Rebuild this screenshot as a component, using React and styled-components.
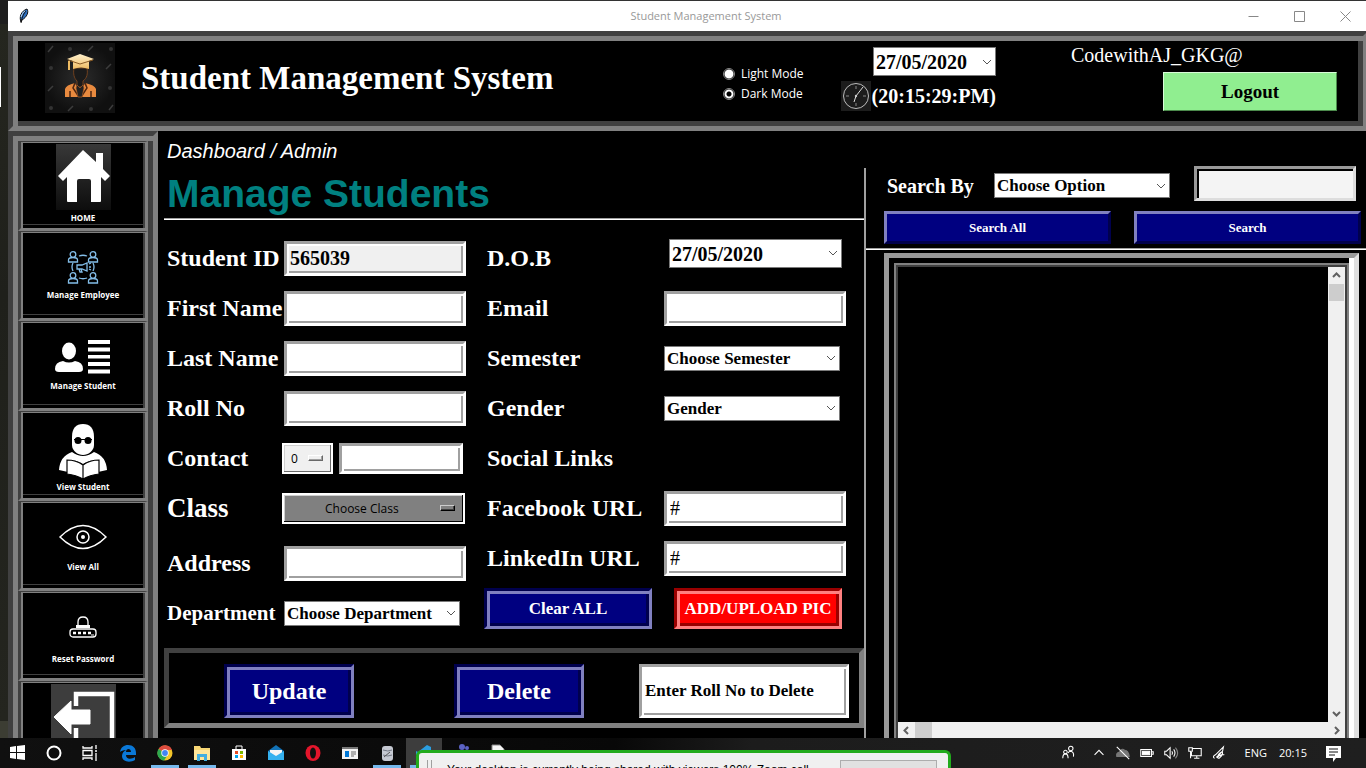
import React from "react";
import styled, { createGlobalStyle, css } from "styled-components";

const SERIF = '"Liberation Serif", "Times New Roman", serif';
const SANS = '"Liberation Sans", Arial, sans-serif';
const UI = '"Open Sans", "Noto Sans", sans-serif';

/* Classic two-tone bevels: an outer border and an inner inset line. */
const groove = (outer, inner, dark, light) => css`
  border: ${outer}px solid;
  border-color: ${dark} ${light} ${light} ${dark};
  box-shadow: inset ${inner}px ${inner}px 0 ${light}, inset -${inner}px -${inner}px 0 ${dark};
`;

const GlobalStyle = createGlobalStyle`
  *, *::before, *::after { box-sizing: border-box; }
  html, body { margin: 0; background: #000; overflow: hidden; }
  button, input, select { font: inherit; margin: 0; border-radius: 0; }
  button { cursor: pointer; }
  svg { display: block; flex: none; }
`;

const Screen = styled.div`
  display: flex;
  flex-direction: column;
  height: 100vh;
  background: #000;
  color: #fff;
  font-family: ${SERIF};
`;

const Desktop = styled.div`
  flex: 1;
  min-height: 0;
  display: flex;
`;

const Gutter = styled.div`
  width: 8px;
  flex: none;
  background: linear-gradient(#1e1e1e 24px, #25261f 24px, #1f201b 40%, #24251f calc(100% - 17px), #3c3d33 calc(100% - 17px));
  padding-top: 67px;
`;

const GutterMark = styled.div`
  width: 1px;
  height: 40px;
  background: #fff;
`;

const Window = styled.div`
  flex: 1;
  min-width: 0;
  display: flex;
  flex-direction: column;
  overflow: hidden;
`;

const TitleBar = styled.header`
  height: 31px;
  flex: none;
  margin-right: -2px;
  border-top: 1px solid #333;
  background: #fff;
  color: #999;
  font: 11px/30px ${UI};
  display: grid;
  grid-template-columns: 1fr auto 1fr;
  padding-left: 10px;
  align-items: center;
`;

const WindowTitle = styled.span`
  padding-left: 26px;
`;

const WindowControls = styled.div`
  justify-self: end;
  display: flex;
`;

const WindowButton = styled.button`
  width: 46px;
  height: 28px;
  border: 0;
  padding: 0;
  background: none;
  display: grid;
  place-items: center;
`;

const Banner = styled.section`
  ${groove(5, 5, "#404040", "#808080")}
  height: 100px;
  flex: none;
  margin-right: -2px;
  padding: 0 26px 0 32px;
  display: flex;
  align-items: flex-start;
`;

const LogoSlot = styled.div`
  margin-top: 7px;
`;

const AppTitle = styled.h1`
  margin: 23px 0 0 26px;
  font: bold 33px/38px ${SERIF};
  white-space: nowrap;
`;

const Modes = styled.fieldset`
  border: 0;
  padding: 0;
  margin: 28px 37px 0 auto;
  display: flex;
  flex-direction: column;
`;

const ModeLabel = styled.label`
  display: flex;
  align-items: center;
  gap: 6px;
  font: 12px/20px ${UI};
`;

const Radio = styled.input`
  appearance: none;
  width: 12px;
  height: 12px;
  border-radius: 50% !important;
  border: 1px solid #888;
  background: radial-gradient(circle, ${(p) => (p.defaultChecked ? "#000 2px, #fff 3px" : "#fff 3px")}, #fff 4px, #000 5px);
`;

const ClockBlock = styled.div`
  margin-top: 11px;
  display: flex;
  flex-direction: column;
  align-items: flex-end;
  gap: 5px;
`;

const TimeRow = styled.div`
  display: flex;
  align-items: center;
  gap: 1px;
  font: bold 20px/28px ${SERIF};
`;

const Account = styled.div`
  margin: 7px 0 0 75px;
  width: 266px;
  display: flex;
  flex-direction: column;
  font: 20px/24px ${SERIF};
`;

const LogoutButton = styled.button`
  align-self: flex-end;
  margin-top: 5px;
  width: 174px;
  height: 39px;
  background: #90ee90;
  color: #000;
  border: 1px solid;
  border-color: #d8fbd8 #4c8a4c #4c8a4c #d8fbd8;
  font: bold 19px/24px ${SERIF};
`;

const Body = styled.div`
  flex: 1;
  min-height: 0;
  display: grid;
  grid-template-columns: 150px minmax(0, 708fr) minmax(0, 500fr);
  grid-template-rows: minmax(0, 1fr);
`;

const Sidebar = styled.nav`
  ${groove(5, 5, "#404040", "#808080")}
  border-bottom: 0;
  box-shadow: inset 5px 5px 0 #808080, inset -5px 0 0 #404040;
  padding: 5px 5px 0;
  overflow: hidden;
`;

const SideButton = styled.button`
  width: 100%;
  height: 90px;
  padding: 2px 0 0;
  background: #000;
  color: #fff;
  border: solid;
  border-width: 1px 3px 3px 3px;
  border-color: #404040 #808080 #808080 #404040;
  box-shadow: inset 2px 1px 0 #808080, inset -2px 0 0 #404040, inset 0 -3px 0 #000, inset 0 -4px 0 #404040;
  display: flex;
  flex-direction: column;
  align-items: center;
  font: bold 8px/10px ${UI};

  svg {
    margin-top: ${(p) => p.$top}px;
    margin-bottom: ${(p) => p.$gap}px;
  }
`;

const Main = styled.main`
  padding: 9px 0 0 6px;
  display: flex;
  flex-direction: column;
  align-items: stretch;
  overflow: hidden;
`;

const Crumb = styled.p`
  margin: 0 0 0 3px;
  font: italic 20px/22px ${SANS};
`;

const Heading = styled.h2`
  margin: 8px 0 0 3px;
  height: 48px;
  color: #008080;
  font: bold 39px/48px ${SANS};
`;

const Rule = styled.div`
  height: 2px;
  flex: none;
  background: linear-gradient(#a0a0a0 1px, #fff 1px);
`;

const Form = styled.form`
  padding: 13px 0 0 3px;
  display: flex;
  gap: 21px;
`;

const Column = styled.div`
  display: flex;
  flex-direction: column;
`;

const Row = styled.div`
  display: grid;
  grid-template-columns: ${(p) => p.$label}px auto;
  align-items: center;
  justify-content: start;
  height: 50px;
  margin-top: ${(p) => p.$gap || 0}px;
  white-space: nowrap;
`;

const Label = styled.label`
  font: bold ${(p) => p.$size || 24}px/30px ${SERIF};
`;

const Entry = styled.input`
  ${groove(3, 2, "#a0a0a0", "#ffffff")}
  width: ${(p) => p.$w || 182}px;
  height: ${(p) => p.$h || 35}px;
  padding: 0 3px;
  background: ${(p) => (p.readOnly ? "#f0f0f0" : "#fff")};
  color: #000;
  outline: 0;
  font: ${(p) => p.$weight || "bold"} ${(p) => p.$size || 20}px/24px ${SERIF};
`;

const SearchEntry = styled(Entry)`
  border-color: #999 #ddd #ddd #999;
  box-shadow: inset 2px 2px 0 #000;
  background: #f4f4f4;
`;

const SelectBox = styled.div`
  display: grid;
  align-items: center;
  width: ${(p) => p.$w}px;
  height: ${(p) => p.$h}px;
  margin: ${(p) => p.$margin || 0};

  > * { grid-area: 1 / 1; }
  > svg { justify-self: end; margin-right: 4px; pointer-events: none; }
`;

const Select = styled.select`
  appearance: none;
  width: 100%;
  height: 100%;
  border: 1px solid #7a7a7a;
  background: #fff;
  color: #000;
  padding: 1px 0 0 2px;
  outline: 0;
  font: bold ${(p) => p.$size || 17}px/20px ${SERIF};
`;

const OptionMenu = styled.div`
  display: grid;
  align-items: center;
  width: ${(p) => p.$w}px;
  height: 31px;
  margin-left: -2px;

  > * { grid-area: 1 / 1; }
  select {
    appearance: none;
    width: 100%;
    height: 100%;
    border: 2px solid #fff;
    outline: 0;
    padding-top: 1px;
    padding-left: ${(p) => p.$indent}px;
    background: ${(p) => (p.$gray ? "#808080" : "#f0f0f0")};
    box-shadow: inset -1px -1px 0 ${(p) => (p.$gray ? "#000" : "#696969")}, inset 1px 1px 0 #d0d0d0;
    color: #000;
    font: 12px/20px ${UI};
  }
`;

const Indicator = styled.span`
  justify-self: end;
  margin-right: 10px;
  width: 15px;
  height: 6px;
  pointer-events: none;
  border: 1px solid;
  border-color: ${(p) => (p.$gray ? "#ccc #000 #000 #ccc" : "#fff #696969 #696969 #fff")};
  box-shadow: inset -1px -1px 0 ${(p) => (p.$gray ? "#404040" : "#a0a0a0")};
`;

const Pair = styled.div`
  display: flex;
  gap: 6px;
`;

const Actions = styled.div`
  display: flex;
  gap: 22px;
  margin: 5px 0 0 -3px;
`;

const ActionButton = styled.button`
  ${(p) => (p.$danger ? groove(3, 3, "#990000", "#ff8080") : groove(3, 3, "#00004d", "#8080c0"))}
  width: ${(p) => p.$w}px;
  height: ${(p) => p.$h}px;
  padding: 0;
  background: ${(p) => (p.$danger ? "#f00" : "#000080")};
  color: #fff;
  white-space: nowrap;
  font: bold ${(p) => p.$size}px/26px ${SERIF};
`;

const CommandPanel = styled.section`
  height: 80px;
  flex: none;
  margin: 10px 2px 0 0;
  padding: 6px 10px 0 55px;
  border: 5px solid;
  border-color: #404040 #808080 #808080 #404040;
  display: flex;
  align-items: center;
  justify-content: space-between;
`;

const CommandButtons = styled.div`
  display: flex;
  gap: 100px;
`;

const SearchPane = styled.aside`
  padding-top: 37px;
  display: flex;
  flex-direction: column;
  overflow: hidden;
  margin-left: -2px;
`;

const SearchInner = styled.div`
  flex: 1;
  min-height: 0;
  display: flex;
  flex-direction: column;
  border-left: 2px solid #fff;
  border-image: linear-gradient(90deg, #a0a0a0 50%, #fff 50%) 0 0 0 2;
`;

const SearchRow = styled.form`
  display: flex;
  align-items: center;
  height: 35px;
  margin: -2px 10px 0 21px;
  white-space: nowrap;
`;

const SearchLabel = styled(Label).attrs({ $size: 20 })`
  flex: 1;
  padding-top: 4px;
`;

const SearchSlot = styled.div`
  margin-left: 24px;
`;

const SearchButtons = styled.div`
  display: flex;
  gap: 23px;
  margin: 10px 5px 4px 18px;
`;

const SearchButton = styled.button`
  flex: 1;
  height: 33px;
  background: #000080;
  color: #fff;
  border: 3px solid;
  border-color: #8080c0 #00004d #00004d #8080c0;
  font: bold 13px/20px ${SERIF};
`;

const TableFrame = styled.section`
  flex: 1;
  min-height: 0;
  margin: 3px 7px 0 18px;
  border: 5px solid;
  border-color: #999 #e0e0e0 #e0e0e0 #999;
  border-bottom: 0;
  box-shadow: inset -5px 0 0 #fff;
  padding: 5px 5px 0;
  display: flex;
`;

const Table = styled.div`
  flex: 1;
  background: #000;
  border: 2px solid #808080;
  border-bottom: 0;
  box-shadow: inset 2px 2px 0 #404040, inset -2px 0 0 #404040;
  padding: 2px 2px 0;
  display: grid;
  grid-template: minmax(0, 1fr) 16px / minmax(0, 1fr) 17px;
`;

const Scroll = styled.div`
  grid-column: ${(p) => (p.$across ? "1 / 3" : "2")};
  grid-row: ${(p) => (p.$across ? 2 : 1)};
  background: #f0f0f0;
  display: flex;
  flex-direction: ${(p) => (p.$across ? "row" : "column")};
  justify-content: space-between;
  align-items: center;
`;

const ScrollStart = styled.div`
  display: flex;
  flex-direction: inherit;
  align-items: center;
`;

const Thumb = styled.div`
  width: ${(p) => (p.$across ? 17 : 15)}px;
  height: ${(p) => (p.$across ? 16 : 17)}px;
  background: #cdcdcd;
`;

const Taskbar = styled.footer`
  position: relative;
  height: 30px;
  flex: none;
  background: linear-gradient(90deg, #101010, #080808 45%, #1c1c1c 55%, #1f1f1f);
  display: flex;
  justify-content: space-between;
  font: 11px/28px ${UI};
`;

const Apps = styled.div`
  display: flex;
`;

const Pinned = styled.div`
  display: flex;
  margin-left: 2px;
  gap: 1px;
`;

const TaskButton = styled.button`
  width: 36px;
  height: 30px;
  padding: 0;
  border: 0;
  background: ${(p) => (p.$open ? "linear-gradient(#76b9ed, #76b9ed) bottom / 28px 3px no-repeat" : "none")};
  background-color: ${(p) => (p.$active ? "#3d3d3d" : "transparent")};
  display: grid;
  place-items: center;
`;

const Tray = styled.div`
  display: flex;
  align-items: center;
  padding-right: 24px;
  gap: 8px;
  color: #fff;
`;

const TrayText = styled.span`
  margin-left: 4px;
`;

const TrayIcons = styled.div`
  display: flex;
  gap: 8px;
  margin-right: 6px;

  svg:first-child { margin-right: 6px; }
`;

const NoticeSlot = styled.span`
  margin-left: 10px;
`;

const Toast = styled.div`
  position: absolute;
  left: 416px;
  bottom: 0;
  width: 535px;
  height: 18px;
  overflow: hidden;
  background: #f0f0f0;
  border: 3px solid #22ab1c;
  border-bottom: 0;
  border-radius: 6px 6px 0 0;
  display: flex;
  align-items: flex-start;
  color: #000;
  padding: 7px 11px 0 8px;
`;

const Grip = styled.span`
  width: 5px;
  height: 20px;
  border: solid #a0a0a0;
  border-width: 0 1px;
`;

const ToastText = styled.span`
  margin-left: 15px;
  flex: 1;
  white-space: nowrap;
  font: 12px/20px ${SANS};
`;

const ToastButton = styled.button`
  width: 97px;
  height: 24px;
  flex: none;
  border: 1px solid #adadad;
  background: #e1e1e1;
`;

const TURN = { down: 0, up: 180, left: 90, right: 270 };

function Chevron() {
  return (
    <svg width="10" height="10" viewBox="0 0 10 10" fill="none" stroke="#555">
      <path d="M1 3 5 7 9 3" />
    </svg>
  );
}

function ScrollArrow({ dir }) {
  return (
    <svg width="17" height="17" viewBox="0 0 17 17" fill="none" stroke="#606060" strokeWidth="2">
      <path d="M5 7 8.500 10.500 12 7" transform={`rotate(${TURN[dir]} 8.500 8.500)`} />
    </svg>
  );
}

function Dropdown({ id, label, value, w, h = 25, size, margin }) {
  return (
    <SelectBox $w={w} $h={h} $margin={margin}>
      <Select id={id} aria-label={label} $size={size}>
        <option>{value}</option>
      </Select>
      <Chevron />
    </SelectBox>
  );
}

function Field({ id, label, labelWidth = 117, size, gap, children, ...entry }) {
  return (
    <Row $label={labelWidth} $gap={gap}>
      <Label htmlFor={id} $size={size}>{label}</Label>
      {children || <Entry id={id} {...entry} />}
    </Row>
  );
}

const Feather = () => (
  <svg width="12" height="16" viewBox="0 0 12 16">
    <path d="M3 14C1 9 3 3 9 1c2 3 0 8-5 11z" fill="#2d6fc0" stroke="#111" />
    <path d="M3 15C4 9 6 5 8 3" stroke="#111" fill="none" />
    <path d="M3 9c1-3 2-5 4-6" stroke="#b7d7f5" fill="none" />
  </svg>
);

const Graduate = () => (
  <svg width="70" height="70" viewBox="0 0 70 70">
    <defs>
      <radialGradient id="gradBg"><stop offset="0" stopColor="#2c2c2c" /><stop offset="1" stopColor="#101010" /></radialGradient>
      <linearGradient id="cap" x2="0" y2="1"><stop stopColor="#fff0cc" /><stop offset="1" stopColor="#eebb62" /></linearGradient>
    </defs>
    <path fill="url(#gradBg)" d="M0 0h70v70H0z" />
    <path d="m3 9 5-6m35 5 5-5M3 48l5-5m15 25 5-5m36 4 4-5m-7-36 5-5" stroke="#3c3c3c" strokeWidth="1.500" />
    <g fill="#333"><circle cx="25" cy="6" r="2" /><circle cx="66" cy="6" r="2" /><circle cx="6" cy="25" r="2" /><circle cx="65" cy="45" r="2" /><circle cx="6" cy="65" r="2" /><circle cx="46" cy="66" r="2" /></g>
    <path d="M29 25c-1 6 0 10 3 13v6h6v-6c4-3 5-7 4-13z" fill="#1b1b1b" stroke="#70401e" />
    <path d="M35 11 49 16l-5 2v8q-8-3-16 0v-8l-6-2z" fill="url(#cap)" />
    <path d="m23 17 12 4 13-4" stroke="#8a5a24" fill="none" />
    <path d="M23 18h2v9h-2z" fill="#eebb62" />
    <path d="M20 54V46q1-4 10-6l5 11 5-11q10 2 11 6v8z" fill="#e88a3f" />
    <path d="m30 40-2 5 6 9m6-14 2 5-6 9M25 48v6m21-6v6" fill="none" stroke="#4b2410" strokeWidth="1.500" />
    <path d="m32 42 3 3 3-3 1 3-2 9h-4l-2-9z" fill="#222" stroke="#a85c25" strokeWidth=".7" />
  </svg>
);

const Clock = () => (
  <svg width="30" height="30" viewBox="0 0 30 30" fill="none" stroke="#bbb">
    <path fill="#1c1c1c" stroke="none" d="M0 0h30v30H0z" />
    <circle cx="15" cy="15" r="12.500" />
    <path d="M15 5v3m0 14v3M5 15h3m14 0h3" stroke="#888" />
    <path d="m13 21 2-6 7-9" stroke="#ddd" />
    <circle cx="15" cy="15" r="1.200" fill="#ccc" stroke="none" />
  </svg>
);

const HomeIcon = () => (
  <svg width="55" height="66" viewBox="0 0 55 66">
    <defs><linearGradient id="homeBg" x2="0" y2="1"><stop stopColor="#383838" /><stop offset="1" stopColor="#0d0d0d" /></linearGradient></defs>
    <path fill="url(#homeBg)" d="M0 0h55v66H0z" />
    <path fill="#fff" d="M27 6 40 18V9h7v16l7 7-5 5-4-4v24q0 1-1 1H35V37q0-2-2-2H23q-2 0-2 2v21H12q-1 0-1-1V33l-4 4-5-5z" />
  </svg>
);

const Person = ({ x, y }) => (
  <g transform={`translate(${x} ${y})`}><circle cx="5" cy="3.500" r="2.800" /><path d="M.5 11V9q0-2.500 4.500-2.500T9.500 9v2z" /></g>
);

const EmployeeIcon = () => (
  <svg width="32" height="34" viewBox="0 0 32 34" fill="none" stroke="#83bde8" strokeWidth="1.300">
    <Person x={1} y={1} /><Person x={21} y={1} /><Person x={1} y={22} /><Person x={21} y={22} />
    <path d="M12 6q4-1.500 8 0M12 28q4 1.500 8 0M6 13q-2 4 0 8M26 13q2 4 0 8" />
    <path d="M10 15h5l5-2v8l-5-2h-5zM12 19l1 3h2l-1-3M22 14l2-1M22 17h2M22 19l2 1" />
  </svg>
);

const StudentIcon = () => (
  <svg width="56" height="34" viewBox="0 0 56 34" fill="#fff">
    <ellipse cx="14" cy="11" rx="7" ry="8.500" />
    <path d="M0 29q0-7 8-8 6 3 12 0 8 1 8 8 0 3-4 3H4q-4 0-4-3zM33 0h22v4H33zM33 7.500h22v4H33zM33 15h22v3.500H33zM33 22h22v4H33zM33 29.500h22v4H33z" />
  </svg>
);

const ReaderIcon = () => (
  <svg width="50" height="56" viewBox="0 0 50 56">
    <path fill="#fff" d="M14 13C14 4 18 0 25 0s11 4 11 13v8c0 6-6 10-11 10s-11-4-11-10z" />
    <path fill="#fff" d="M14 28q11 8 22 0 12 4 13 18l-9 2V37q-8-2-15 3-7-5-15-3v11l-9-2Q2 32 14 28z" />
    <path fill="#fff" stroke="#000" strokeWidth="1.200" d="M9 36q9 0 16 5 7-5 16-5v14q-9 1-16 5-7-4-16-5zM25 41v14" />
    <g fill="#000"><circle cx="20" cy="16.500" r="3.500" /><circle cx="30" cy="16.500" r="3.500" /><path d="M16 15h18v1H16z" /></g>
  </svg>
);

const EyeIcon = () => (
  <svg width="48" height="26" viewBox="0 0 48 26" fill="none" stroke="#fff" strokeWidth="1.500">
    <path d="M1 13Q24-10 47 13 24 36 1 13z" /><circle cx="24" cy="13" r="6" /><circle cx="24" cy="13" r="2" fill="#fff" stroke="none" />
  </svg>
);

const LockIcon = () => (
  <svg width="28" height="22" viewBox="0 0 28 22" fill="none" stroke="#fff" strokeWidth="1.300">
    <path d="M9 10V6q0-5 5-5t5 5v4" /><path d="M7 9h14v3H7z" fill="#fff" stroke="none" />
    <rect x="1" y="13" width="26" height="8" rx="3" />
    <path d="M4 17h3m2 0h3m2 0h3m2 0h3" strokeWidth="2.500" /><path d="M22 19h3" strokeWidth="1" />
  </svg>
);

const ExitIcon = () => (
  <svg width="65" height="66" viewBox="0 0 65 66">
    <path fill="#3d3d3d" d="M0 0h65v66H0z" />
    <path d="M25 22V10h36v60H25V44" fill="none" stroke="#fff" strokeWidth="4.500" />
    <path d="M3 33 20 17v9h19v14H20v10z" fill="#fff" strokeLinejoin="round" stroke="#fff" />
  </svg>
);

const SIDE = [
  ["HOME", HomeIcon, 0, 3],
  ["Manage Employee", EmployeeIcon, 16, 6],
  ["Manage Student", StudentIcon, 16, 7],
  ["View Student", ReaderIcon, 10, 2],
  ["View All", EyeIcon, 20, 12],
  ["Reset Password", LockIcon, 22, 16],
];

const APP_ICONS = {
  start: <path fill="#fff" d="m2 4 6-1v6H2zM9 3l8-1v7H9zM2 10h6v6l-6-1zM9 10h8v7l-8-1z" />,
  cortana: <circle cx="10" cy="10" r="6.500" fill="none" stroke="#fff" strokeWidth="2" />,
  taskview: <path d="M3 3v2h9V3M3 17v-2h9v2M3 7.500h9v5H3zM16 2v4m0 4v8M15 8h2" fill="none" stroke="#fff" strokeWidth="1.300" />,
  edge: <path fill="#0a78d7" d="M2 9c1-5 4-7 8-7 5 0 8 3 8 8v2H8c0 5 6 4 9 2v3c-5 3-13 2-13-4 0-3 2-5 4-6-3 0-5 1-6 2zm6 0h5c0-4-5-4-5 0z" />,
  chrome: (
    <g>
      <circle cx="10" cy="10" r="7.500" fill="#f4c52a" />
      <path d="M10 10 3.500 6A7.500 7.500 0 0 1 17 7H10z" fill="#dd4b3e" />
      <path d="M10 10 3.500 6A7.500 7.500 0 0 0 9 17.500l4-6z" fill="#2da94f" />
      <circle cx="10" cy="10" r="3.700" fill="#fff" /><circle cx="10" cy="10" r="2.900" fill="#4285f4" />
    </g>
  ),
  folder: <g><path d="M2 3h6l1 2h9v12H2z" fill="#f8d775" /><path d="M2 7h16v10H2z" fill="#ffe69a" /><path d="M5 11h10v7h-3v-4H8v4H5z" fill="#43aee0" /></g>,
  store: (
    <g>
      <path d="M7 6V3h6v3" fill="none" stroke="#fff" /><path d="M3 6h14v11H3z" fill="#fff" />
      <path fill="#e74c25" d="M6 8h3v3H6z" /><path fill="#7fba00" d="M11 8h3v3h-3z" /><path fill="#00a4ef" d="M6 12h3v3H6z" /><path fill="#ffb900" d="M11 12h3v3h-3z" />
    </g>
  ),
  mail: <g><path d="m2 8 8-6 8 6v9H2z" fill="#1272b6" /><path d="M4 7h12v6H4z" fill="#f5f5f5" /><path d="m2 8 8 5 8-5v9H2z" fill="#35b1ef" /></g>,
  opera: <g><ellipse cx="10" cy="10" rx="7.500" ry="8" fill="#e3152b" /><ellipse cx="10" cy="10" rx="3" ry="5.500" fill="#101010" /></g>,
  news: <g><path d="M2 4h16v12H2z" fill="#f2f2f2" /><path d="M2 4h16v2H2z" fill="#777" /><path d="M5 8h4v6H5z" fill="#0078d7" /><path d="M11 9h5m-5 2h5m-5 2h3" stroke="#666" /></g>,
  disk: <g><rect x="5" y="3" width="11" height="15" rx="3" fill="#c5c9d2" /><path d="M6 7q5 2 9 0M6 12q5 2 9 0" stroke="#737884" fill="none" /><path d="m7 14 6-5" stroke="#555" /></g>,
  code: <path d="m13 2 4 2v12l-4 2-9-7-2 1V8l2 1zm0 5-5 4 5 3z" fill="#2b9ee0" />,
  teams: <g fill="#5b62c3"><circle cx="11" cy="4" r="3" /><circle cx="16" cy="5" r="2" /><path d="M3 7h14v8H3z" /></g>,
  doc: <path d="M4 2h8l4 4v12H4z" fill="#f5f5f5" stroke="#888" />,
};

const PINNED = [
  ["edge"], ["chrome", 1], ["folder", 1], ["store"], ["mail"], ["opera"],
  ["news"], ["disk", 1], ["code", 1, 1], ["teams"], ["doc"],
];

function Task({ name, open, active }) {
  return (
    <TaskButton type="button" aria-label={name} $open={open} $active={active}>
      <svg width="20" height="20" viewBox="0 0 20 20">{APP_ICONS[name]}</svg>
    </TaskButton>
  );
}

const TRAY = [
  <g key="people"><circle cx="11" cy="4" r="2.500" /><circle cx="5" cy="8" r="2" /><path d="M2 15q0-5 3-5t3 5M8 9q1-2 3-2 4 1 3 6" /></g>,
  <path key="caret" d="m4 11 5-5 5 5" />,
  <g key="cloud"><path d="M2 13q-1-4 3-5 2-5 6-2 4 0 5 7z" fill="#777" stroke="#777" /><path d="m2 2 14 14" /></g>,
  <g key="battery"><path d="M2 5h12v8H2zM14 7.500h2v3h-2" /><path d="M4 7h8v4H4z" fill="#fff" /></g>,
  <g key="volume"><path d="M2 7h2l4-4v12l-4-4H2zM10 7q1.500 2 0 4M12 5q3 4 0 8" /><path d="M14 3q5 6 0 12" stroke="#888" /></g>,
  <g key="network"><path d="M6 4h10v8H5V8M8 15h6M11 12v3M2 3h4v4H2zM4 7v8" /></g>,
  <g key="pen"><path d="M4 15q-3-2 1-4l9-9-1 5-7 7M8 11q5-5 5-2t-4 6l-2-1q3-4 8-3" /></g>,
];

export default function App() {
  return (
    <Screen>
      <GlobalStyle />
      <Desktop>
        <Gutter><GutterMark /></Gutter>
        <Window>
          <TitleBar>
            <Feather />
            <WindowTitle>Student Management System</WindowTitle>
            <WindowControls>
              {["M3 8h10", "M3 3h10v10H3z", "m3 3 10 10M13 3 3 13"].map((d, i) => (
                <WindowButton key={d} type="button" aria-label={["Minimize", "Maximize", "Close"][i]}>
                  <svg width="16" height="16" viewBox="0 0 16 16" fill="none" stroke="#888">
                    <path d={d} transform="translate(.5 .5)" />
                  </svg>
                </WindowButton>
              ))}
            </WindowControls>
          </TitleBar>

          <Banner>
            <LogoSlot><Graduate /></LogoSlot>
            <AppTitle>Student Management System</AppTitle>
            <Modes>
              <ModeLabel><Radio type="radio" name="mode" />Light Mode</ModeLabel>
              <ModeLabel><Radio type="radio" name="mode" defaultChecked />Dark Mode</ModeLabel>
            </Modes>
            <ClockBlock>
              <Dropdown label="Current date" value="27/05/2020" w={123} h={29} size={20} />
              <TimeRow><Clock /><span>(20:15:29:PM)</span></TimeRow>
            </ClockBlock>
            <Account>
              <span>CodewithAJ_GKG@</span>
              <LogoutButton type="button">Logout</LogoutButton>
            </Account>
          </Banner>

          <Body>
            <Sidebar>
              {SIDE.map(([name, Icon, top, gap]) => (
                <SideButton key={name} type="button" $top={top} $gap={gap}>
                  <Icon />
                  {name}
                </SideButton>
              ))}
              <SideButton type="button" aria-label="Exit" $top={0} $gap={0}><ExitIcon /></SideButton>
            </Sidebar>

            <Main>
              <Crumb>Dashboard / Admin</Crumb>
              <Heading>Manage Students</Heading>
              <Rule />
              <Form>
                <Column>
                  <Field id="sid" label="Student ID" defaultValue="565039" readOnly />
                  <Field id="first" label="First Name" />
                  <Field id="last" label="Last Name" />
                  <Field id="roll" label="Roll No" />
                  <Field id="phone" label="Contact">
                    <Pair>
                      <OptionMenu $w={51} $indent={7}>
                        <select aria-label="Country code"><option>0</option></select>
                        <Indicator />
                      </OptionMenu>
                      <Entry id="phone" $w={124} $h={31} />
                    </Pair>
                  </Field>
                  <Field id="class" label="Class" size={27}>
                    <OptionMenu $w={183} $indent={41} $gray>
                      <select id="class"><option>Choose Class</option></select>
                      <Indicator $gray />
                    </OptionMenu>
                  </Field>
                  <Field id="address" label="Address" gap={5} />
                  <Field id="dept" label="Department" size={21}>
                    <Dropdown id="dept" value="Choose Department" w={176} />
                  </Field>
                </Column>
                <Column>
                  <Field id="dob" label="D.O.B" labelWidth={177}>
                    <Dropdown id="dob" value="27/05/2020" w={173} h={29} size={20} margin="0 0 10px 5px" />
                  </Field>
                  <Field id="email" label="Email" labelWidth={177} />
                  <Field id="semester" label="Semester" labelWidth={177}>
                    <Dropdown id="semester" value="Choose Semester" w={176} />
                  </Field>
                  <Field id="gender" label="Gender" labelWidth={177}>
                    <Dropdown id="gender" value="Gender" w={176} />
                  </Field>
                  <Row $label={177}><Label as="span">Social Links</Label></Row>
                  <Field id="facebook" label="Facebook URL" labelWidth={177} defaultValue="#" $weight="normal" />
                  <Field id="linkedin" label="LinkedIn URL" labelWidth={177} defaultValue="#" $weight="normal" />
                  <Actions>
                    <ActionButton type="button" $w={168} $h={41} $size={17}>Clear ALL</ActionButton>
                    <ActionButton type="button" $w={168} $h={41} $size={17} $danger>ADD/UPLOAD PIC</ActionButton>
                  </Actions>
                </Column>
              </Form>
              <CommandPanel>
                <CommandButtons>
                  <ActionButton type="button" $w={130} $h={54} $size={24}>Update</ActionButton>
                  <ActionButton type="button" $w={130} $h={54} $size={24}>Delete</ActionButton>
                </CommandButtons>
                <Entry aria-label="Roll number to delete" defaultValue="Enter Roll No to Delete" $w={210} $h={54} $size={17} />
              </CommandPanel>
            </Main>

            <SearchPane>
              <SearchInner>
                <SearchRow>
                  <SearchLabel htmlFor="searchBy">Search By</SearchLabel>
                  <Dropdown id="searchBy" value="Choose Option" w={176} margin="4px 0 0" />
                  <SearchSlot><SearchEntry aria-label="Search text" $w={162} /></SearchSlot>
                </SearchRow>
                <SearchButtons>
                  <SearchButton type="button">Search All</SearchButton>
                  <SearchButton type="button">Search</SearchButton>
                </SearchButtons>
                <Rule />
                <TableFrame>
                  <Table>
                    <Scroll>
                      <ScrollStart><ScrollArrow dir="up" /><Thumb /></ScrollStart>
                      <ScrollArrow dir="down" />
                    </Scroll>
                    <Scroll $across>
                      <ScrollStart><ScrollArrow dir="left" /><Thumb $across /></ScrollStart>
                      <ScrollArrow dir="right" />
                    </Scroll>
                  </Table>
                </TableFrame>
              </SearchInner>
            </SearchPane>
          </Body>
        </Window>
      </Desktop>

      <Taskbar>
        <Apps>
          <Task name="start" /><Task name="cortana" /><Task name="taskview" />
          <Pinned>
            {PINNED.map(([name, open, active]) => <Task key={name} name={name} open={open} active={active} />)}
          </Pinned>
        </Apps>
        <Tray>
          <TrayIcons>
            {TRAY.map((icon, i) => (
              <svg key={i} width="16" height="16" viewBox="0 0 18 18" fill="none" stroke="#fff" strokeWidth="1.200">{icon}</svg>
            ))}
          </TrayIcons>
          <TrayText>ENG</TrayText>
          <TrayText>20:15</TrayText>
          <NoticeSlot>
            <svg width="17" height="17" viewBox="0 0 17 17">
              <path d="M1 1h15v12h-5l-3 4v-4H1z" fill="#fff" /><path d="M4 4h9M4 7h9M4 10h6" stroke="#111" />
            </svg>
          </NoticeSlot>
        </Tray>
        <Toast>
          <Grip />
          <ToastText>Your desktop is currently being shared with viewers 100% Zoom call</ToastText>
          <ToastButton type="button" aria-label="Dismiss" />
        </Toast>
      </Taskbar>
    </Screen>
  );
}
